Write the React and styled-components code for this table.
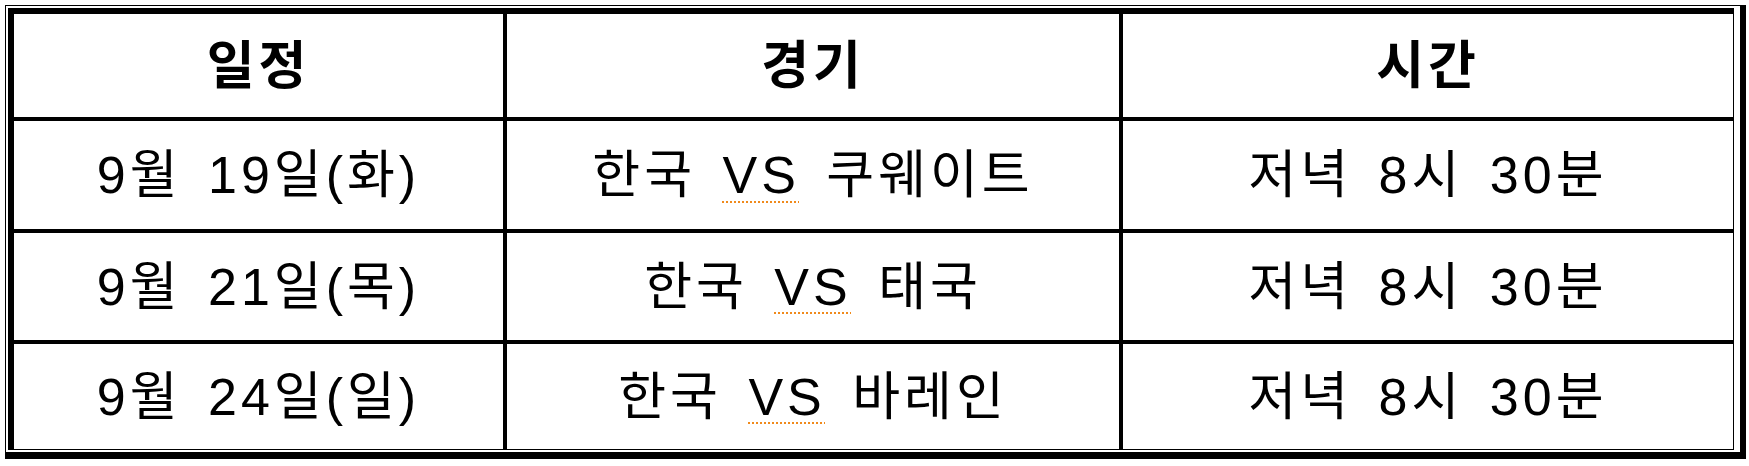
import React from 'react'
import styled, { createGlobalStyle } from 'styled-components'

const GlobalStyle = createGlobalStyle`
  html, body {
    margin: 0;
    padding: 0;
    background: #ffffff;
  }
  body {
    font-family: "Liberation Sans", "Noto Sans CJK KR", sans-serif;
    color: #000000;
  }
`

const schedule = [
  { date: '9월 19일(화)', home: '한국', away: '쿠웨이트', time: '저녁 8시 30분', h: 112 },
  { date: '9월 21일(목)', home: '한국', away: '태국', time: '저녁 8시 30분', h: 111 },
  { date: '9월 24일(일)', home: '한국', away: '바레인', time: '저녁 8시 30분', h: 105 },
]

export default function App() {
  return (
    <>
      <GlobalStyle />
      <Frame>
        <Table>
          <colgroup>
            <col style={{ width: 493 }} />
            <col style={{ width: 616 }} />
            <col style={{ width: 610 }} />
          </colgroup>
          <thead>
            <Row $h={107}>
              <HeadCell>일정</HeadCell>
              <HeadCell>경기</HeadCell>
              <HeadCell $last>시간</HeadCell>
            </Row>
          </thead>
          <tbody>
            {schedule.map((game, i) => {
              const lastRow = i === schedule.length - 1
              return (
                <Row key={game.date} $h={game.h}>
                  <Cell $lastRow={lastRow}>{game.date}</Cell>
                  <Cell $lastRow={lastRow}>
                    {game.home} <Squiggle>VS</Squiggle> {game.away}
                  </Cell>
                  <Cell $lastRow={lastRow} $last>{game.time}</Cell>
                </Row>
              )
            })}
          </tbody>
        </Table>
      </Frame>
    </>
  )
}

const Frame = styled.div`
  width: 1729px;
  margin: 5px 0 0 5px;
  padding: 2px 3px 2px 2px;
  border-style: solid;
  border-color: #000;
  border-width: 1px 6px 7px 1px;
`

const Table = styled.table`
  width: 1726px;
  table-layout: fixed;
  border-collapse: separate;
  border-spacing: 0;
  border-style: solid;
  border-color: #000;
  border-width: 6px 1px 1px 6px;
  box-sizing: border-box;
`

const Row = styled.tr`
  height: ${p => p.$h}px;
`

const HeadCell = styled.th`
  padding: 0;
  text-align: center;
  vertical-align: middle;
  font-size: 52px;
  line-height: 1;
  font-weight: 700;
  letter-spacing: 4px;
  border-bottom: 4px solid #000;
  border-right: ${p => (p.$last ? '0' : '4px solid #000')};
`

const Cell = styled.td`
  padding: 0;
  text-align: center;
  vertical-align: middle;
  font-size: 52px;
  line-height: 1;
  font-weight: 400;
  letter-spacing: 4px;
  word-spacing: 8px;
  white-space: nowrap;
  border-bottom: ${p => (p.$lastRow ? '0' : '4px solid #000')};
  border-right: ${p => (p.$last ? '0' : '4px solid #000')};
`

const Squiggle = styled.span`
  text-decoration: underline dotted #f08a1c;
  text-decoration-thickness: 2px;
  text-underline-offset: 8px;
`
